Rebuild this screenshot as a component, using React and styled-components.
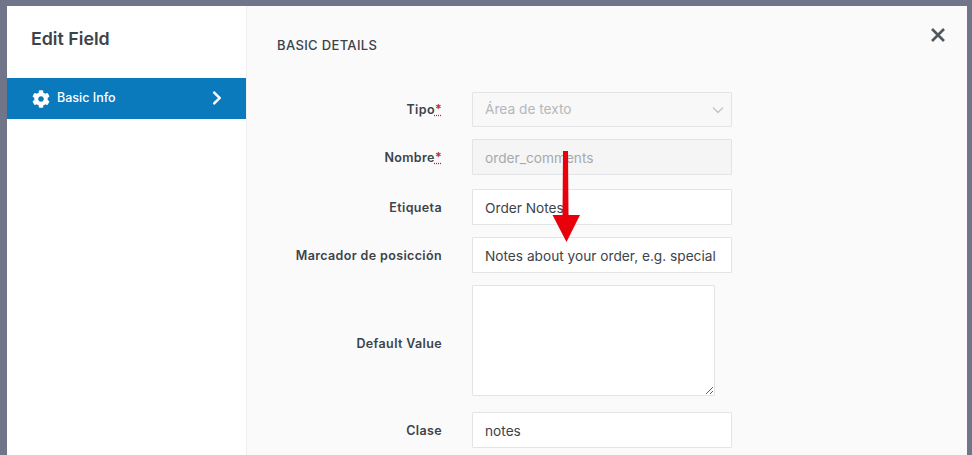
import { useState } from "react";
import styled, { createGlobalStyle } from "styled-components";
import { FaCog, FaChevronRight } from "react-icons/fa";

const GlobalStyle = createGlobalStyle`
  html, body {
    margin: 0;
    height: 455px;
    overflow: hidden;
    background: #71758a;
    font-family: Inter, "Liberation Sans", sans-serif;
  }
`;

const Page = styled.div`
  position: relative;
  height: 455px;
  padding: 6px 5px 0 7px;
  box-sizing: border-box;
  overflow: hidden;
`;

const Modal = styled.div`
  display: flex;
  height: 449px;
  background: #fff;
`;

const Sidebar = styled.aside`
  width: 239px;
  flex-shrink: 0;
  border-right: 1px solid #eceef0;
`;

const Title = styled.h2`
  margin: 0;
  padding: 22px 24px 0;
  height: 72px;
  box-sizing: border-box;
  font-size: 17.8px;
  line-height: 21px;
  font-weight: 600;
  color: #3c434a;
`;

const NavItem = styled.div`
  display: flex;
  align-items: center;
  height: 41px;
  padding: 0 21px 2px 25px;
  box-sizing: border-box;
  background: #0a7abd;
  color: #fff;
  font-size: 12.5px;
  font-weight: 500;

  svg:first-child {
    font-size: 18px;
    margin-right: 7px;
    transform: translateY(1px);
  }

  svg:last-child {
    margin-left: auto;
    font-size: 16px;
  }
`;

const Main = styled.main`
  flex: 1;
  position: relative;
  background: #fafafa;
  padding: 31px 0 0 30px;
`;

const SectionTitle = styled.h3`
  margin: 0 0 39px;
  font-size: 13px;
  line-height: 16px;
  font-weight: 500;
  letter-spacing: 0.35px;
  color: #3c434a;
`;

const CloseButton = styled.button`
  position: absolute;
  top: 21px;
  right: 21px;
  padding: 0;
  display: flex;
  border: 0;
  background: none;
  cursor: pointer;
`;

const Form = styled.form`
  display: flex;
  flex-direction: column;
`;

const Row = styled.div`
  display: flex;
  align-items: center;
  gap: 30px;
  margin-bottom: ${(props) => props.$gap ?? 12}px;
`;

const Label = styled.label`
  width: 165px;
  flex-shrink: 0;
  padding-top: ${(props) => props.$drop ?? 0}px;
  text-align: right;
  font-size: 12.5px;
  font-weight: 600;
  letter-spacing: 0.37px;
  color: #3c434a;
`;

const Required = styled.abbr`
  color: #b32d2e;
  text-decoration: underline dotted #b32d2e;
`;

const fieldStyles = `
  box-sizing: border-box;
  width: 260px;
  border: 1px solid #e2e4e7;
  border-radius: 1px;
  padding: 0 12px;
  font-family: Inter, "Liberation Sans", sans-serif;
  font-size: 13.7px;
  color: #3c434a;
  background: #fff;
  outline: none;
`;

const Input = styled.input`
  ${fieldStyles}
  height: 36px;
  padding-top: 2px;

  &:disabled {
    background: #f5f5f5;
    color: #a7aaad;
  }
`;

const SelectWrap = styled.div`
  position: relative;
  display: flex;

  svg {
    position: absolute;
    top: 14px;
    right: 8px;
    pointer-events: none;
  }
`;

const Select = styled.select`
  ${fieldStyles}
  height: 35px;
  padding-bottom: 2px;
  appearance: none;

  &:disabled {
    background: #f8f8f8;
    color: #b5b7ba;
    opacity: 1;
  }
`;

const TextArea = styled.textarea`
  ${fieldStyles}
  display: block;
  width: 243px;
  height: 111px;
  padding: 8px 12px;
`;

const Arrow = styled.svg`
  position: absolute;
  left: 552px;
  top: 150px;
  pointer-events: none;
`;

function TextRow({ label, required, value, disabled, gap }) {
  return (
    <Row $gap={gap}>
      <Label>
        {label}
        {required && <Required>*</Required>}
      </Label>
      <Input value={value} disabled={disabled} readOnly />
    </Row>
  );
}

export default function App() {
  const [placeholder] = useState("Notes about your order, e.g. special notes for delivery.");

  return (
    <Page>
      <GlobalStyle />
      <Modal>
        <Sidebar>
          <Title>Edit Field</Title>
          <NavItem>
            <FaCog />
            Basic Info
            <FaChevronRight />
          </NavItem>
        </Sidebar>
        <Main>
          <CloseButton aria-label="Close">
            <svg width="16" height="16" viewBox="0 0 16 16">
              <path d="M2 2 L14 14 M14 2 L2 14" stroke="#50575e" strokeWidth="2.6" />
            </svg>
          </CloseButton>
          <SectionTitle>BASIC DETAILS</SectionTitle>
          <Form>
            <Row>
              <Label>
                Tipo<Required>*</Required>
              </Label>
              <SelectWrap>
                <Select disabled value="textarea" onChange={() => {}}>
                  <option value="textarea">Área de texto</option>
                </Select>
                <svg width="12" height="8" viewBox="0 0 12 8">
                  <path d="M1 1.5 L6 6.5 L11 1.5" fill="none" stroke="#c3c4c7" strokeWidth="1.3" />
                </svg>
              </SelectWrap>
            </Row>
            <TextRow label="Nombre" required value="order_comments" disabled gap={14} />
            <TextRow label="Etiqueta" value="Order Notes" />
            <TextRow label="Marcador de posicción" value={placeholder} />
            <Row $gap={16}>
              <Label $drop={5}>Default Value</Label>
              <TextArea readOnly />
            </Row>
            <TextRow label="Clase" value="notes" />
          </Form>
        </Main>
      </Modal>
      <Arrow width="30" height="94" viewBox="0 0 30 94">
        <path d="M11 1 H16 L16.5 65 H28 L14.5 92 L0.5 65 H10.5 Z" fill="#e8000b" />
      </Arrow>
    </Page>
  );
}
